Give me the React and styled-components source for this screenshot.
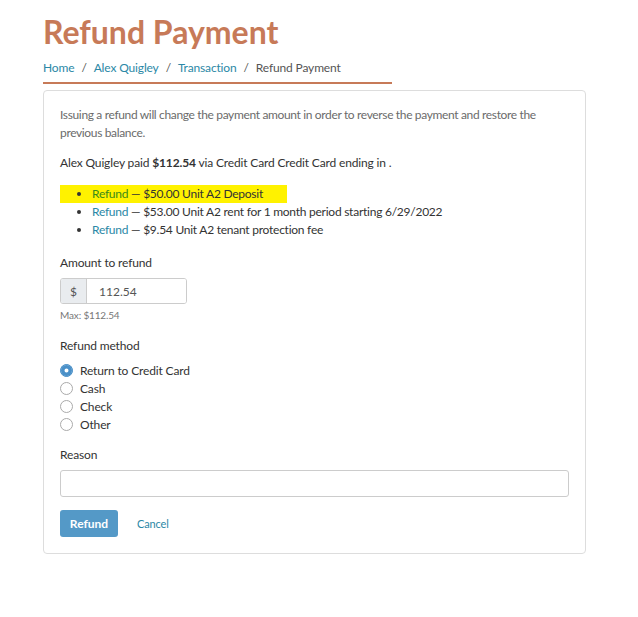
import React from 'react'
import styled, { createGlobalStyle } from 'styled-components';

const Global = createGlobalStyle`
  body {
    margin: 0;
    background: #fff;
    font-family: Lato, "Liberation Sans", sans-serif;
    font-size: 12px;
    letter-spacing: -0.15px;
    color: #333;
  }
  * { box-sizing: border-box; }
`

const Page = styled.div`
  width: 543px;
  margin-left: 43px;
  padding-top: 12px;
`

const Title = styled.h1`
  font-size: 32px;
  font-weight: 700;
  letter-spacing: 0;
  color: #c77a58;
  margin: 0;
  line-height: 40px;
`

const Crumbs = styled.nav`
  width: 349px;
  margin-top: 7px;
  padding-bottom: 5px;
  border-bottom: 2px solid #c77a58;
  display: flex;
  gap: 7px;
  line-height: 18px;
  color: #555;
`

const Link = styled.a`
  color: ${p => p.green ? '#3a8a1a' : '#2b88a6'};
  text-decoration: none;
`

const Card = styled.div`
  margin-top: 6px;
  border: 1px solid #ddd;
  border-radius: 4px;
  padding: 15px 16px 16px;
`

const Muted = styled.p`
  color: #6b6b6b;
  margin: 0;
  line-height: 18px;
  letter-spacing: -0.35px;
  padding-right: 20px;
`

const Text = styled.p`
  margin: 12px 0 0;
  line-height: 18px;
`

const List = styled.ul`
  margin: 13px 0 0;
  padding-left: 32px;
  line-height: 18px;
  letter-spacing: -0.25px;
`

const Item = styled.li`
  width: ${p => p.mark ? 'fit-content' : 'auto'};
  padding-right: ${p => p.mark ? '24px' : '0'};
  background: ${p => p.mark ? '#fff200' : 'transparent'};
  box-shadow: ${p => p.mark ? '-32px 0 0 0 #fff200' : 'none'};
`

const Field = styled.div`
  margin-top: ${p => p.gap || 14}px;
`

const Label = styled.div`
  line-height: 18px;
  margin-bottom: 6px;
`

const Group = styled.div`
  display: flex;
  width: 127px;
  height: 26px;
  border: 1px solid #ccc;
  border-radius: 3px;
  overflow: hidden;
`

const Addon = styled.span`
  width: 26px;
  background: #e9ecef;
  border-right: 1px solid #ccc;
  display: flex;
  align-items: center;
  justify-content: center;
  color: #555;
`

const Input = styled.input`
  flex: 1;
  border: none;
  outline: none;
  padding: 0 12px;
  font: inherit;
  color: #555;
  min-width: 0;
`

const Help = styled.div`
  font-size: 10px;
  color: #777;
  margin-top: 5px;
`

const Radios = styled.div`
  display: flex;
  flex-direction: column;
`

const RadioRow = styled.label`
  display: flex;
  align-items: center;
  gap: 7px;
  height: 18px;
`

const Radio = styled.input`
  appearance: none;
  margin: 0;
  width: 13px;
  height: 13px;
  border-radius: 50%;
  border: 1px solid ${p => p.checked ? '#4a90c8' : '#aaa'};
  background: ${p => p.checked ? '#4a90c8' : '#fff'};
  box-shadow: ${p => p.checked ? 'inset 0 0 0 3.5px #4a90c8, inset 0 0 0 7px #fff' : 'none'};
`

const Wide = styled.input`
  width: 100%;
  height: 27px;
  border: 1px solid #ccc;
  border-radius: 3px;
  outline: none;
`

const Actions = styled.div`
  margin-top: 13px;
  display: flex;
  align-items: center;
  gap: 19px;
`

const Button = styled.button`
  background: #5499c7;
  color: #fff;
  border: none;
  border-radius: 3px;
  height: 27px;
  width: 58px;
  padding: 0;
  font: inherit;
  font-weight: 700;
`

const Cancel = styled.a`
  color: #2b88a6;
  font-size: 11px;
`

const methods = ['Return to Credit Card', 'Cash', 'Check', 'Other']

const App = () => {
  return (
    <Page>
      <Global />
      <Title>Refund Payment</Title>
      <Crumbs>
        <Link>Home</Link><span>/</span>
        <Link>Alex Quigley</Link><span>/</span>
        <Link>Transaction</Link><span>/</span>
        <span>Refund Payment</span>
      </Crumbs>
      <Card>
        <Muted>Issuing a refund will change the payment amount in order to reverse the payment and restore the previous balance.</Muted>
        <Text>Alex Quigley paid <b>$112.54</b> via Credit Card Credit Card ending in .</Text>
        <List>
          <Item mark><Link green>Refund</Link> — $50.00 Unit A2 Deposit</Item>
          <Item><Link>Refund</Link> — $53.00 Unit A2 rent for 1 month period starting 6/29/2022</Item>
          <Item><Link>Refund</Link> — $9.54 Unit A2 tenant protection fee</Item>
        </List>
        <Field gap={15}>
          <Label>Amount to refund</Label>
          <Group>
            <Addon>$</Addon>
            <Input defaultValue="112.54" />
          </Group>
          <Help>Max: $112.54</Help>
        </Field>
        <Field gap={16}>
          <Label>Refund method</Label>
          <Radios>
            {methods.map((m, i) => (
              <RadioRow key={m}>
                <Radio type="radio" name="method" checked={i === 0} readOnly />
                {m}
              </RadioRow>
            ))}
          </Radios>
        </Field>
        <Field gap={13}>
          <Label>Reason</Label>
          <Wide />
        </Field>
        <Actions>
          <Button>Refund</Button>
          <Cancel>Cancel</Cancel>
        </Actions>
      </Card>
    </Page>
  )
}

export default App;
